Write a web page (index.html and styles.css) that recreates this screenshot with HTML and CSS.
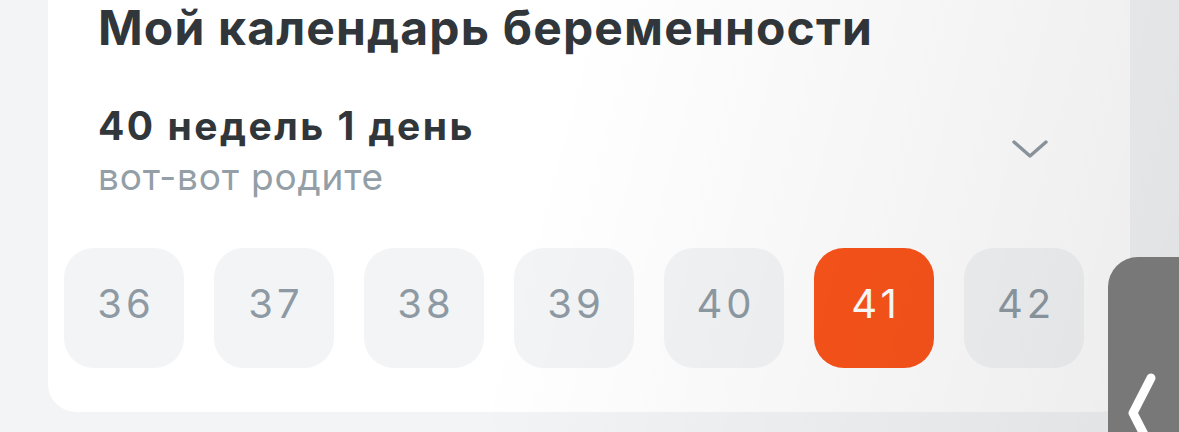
FILE: index.html
```html
<!DOCTYPE html>
<html lang="ru">
<head>
<meta charset="utf-8">
<link rel="stylesheet" href="styles.css">
</head>
<body>
<div class="page">
  <section class="card">
    <h1 class="title">Мой календарь беременности</h1>
    <div class="week-row">
      <div class="week-text">
        <div class="week-main">40 недель 1 день</div>
        <div class="week-sub">вот-вот родите</div>
      </div>
      <svg class="chevron-down" width="40" height="24" viewBox="0 0 40 24">
        <path d="M4 5 L20 19 L36 5" fill="none" stroke="#8e9aa3" stroke-width="3.4" stroke-linecap="round" stroke-linejoin="round"/>
      </svg>
    </div>
    <div class="weeks">
      <div class="wk">36</div>
      <div class="wk">37</div>
      <div class="wk">38</div>
      <div class="wk">39</div>
      <div class="wk">40</div>
      <div class="wk wk-active">41</div>
      <div class="wk">42</div>
    </div>
  </section>
  <div class="shade"></div>
  <div class="side-tab">
    <svg class="chevron-left" width="40" height="80" viewBox="0 0 40 80">
      <path d="M23 9 L5 44 L23 79" fill="none" stroke="#ffffff" stroke-width="9" stroke-linecap="round" stroke-linejoin="round"/>
    </svg>
  </div>
</div>
</body>
</html>
```

FILE: styles.css
```css
html, body {
  margin: 0;
  padding: 0;
}
body {
  background: #f3f4f6;
  font-family: Inter, "Noto Sans", sans-serif;
  overflow: hidden;
}
.page {
  position: relative;
  width: 1179px;
  height: 432px;
  overflow: hidden;
}
.card {
  margin: -40px 0 0 48px;
  width: 1082px;
  box-sizing: border-box;
  height: 452px;
  background: #ffffff;
  border-radius: 28px;
  padding: 40px 16px 0 16px;
  display: flex;
  flex-direction: column;
}
.title {
  margin: 0;
  padding-left: 34px;
  font-size: 48px;
  line-height: 56px;
  font-weight: 700;
  color: #31363b;
  letter-spacing: 1.15px;
  white-space: nowrap;
}
.week-row {
  display: flex;
  align-items: center;
  justify-content: space-between;
  padding-left: 34px;
  padding-right: 64px;
  margin-top: 47px;
}
.week-main {
  font-size: 39px;
  line-height: 46px;
  font-weight: 700;
  color: #31363b;
  letter-spacing: 2.5px;
  white-space: nowrap;
}
.week-sub {
  font-size: 37px;
  line-height: 40px;
  font-weight: 400;
  color: #939ea6;
  margin-top: 8px;
  letter-spacing: 0.8px;
  white-space: nowrap;
}
.chevron-down {
  display: block;
  margin-top: -3px;
}
.weeks {
  display: flex;
  gap: 30px;
  margin-top: 51px;
}
.wk {
  width: 120px;
  height: 120px;
  box-sizing: border-box;
  padding: 0 0 9px 4px;
  border-radius: 30px;
  background: #f3f4f6;
  color: #8e9aa3;
  font-size: 40px;
  font-weight: 400;
  letter-spacing: 4px;
  display: flex;
  align-items: center;
  justify-content: center;
}
.wk-active {
  background: #fa541a;
  color: #ffffff;
}
.shade {
  position: absolute;
  inset: 0;
  pointer-events: none;
  background: linear-gradient(105deg, rgba(0,0,0,0) 45%, rgba(0,0,0,0.075) 100%);
}
.side-tab {
  position: absolute;
  left: 1108px;
  top: 257px;
  width: 120px;
  height: 220px;
  background: #787878;
  border-top-left-radius: 30px;
}
.chevron-left {
  position: absolute;
  left: 20px;
  top: 112px;
}
```
